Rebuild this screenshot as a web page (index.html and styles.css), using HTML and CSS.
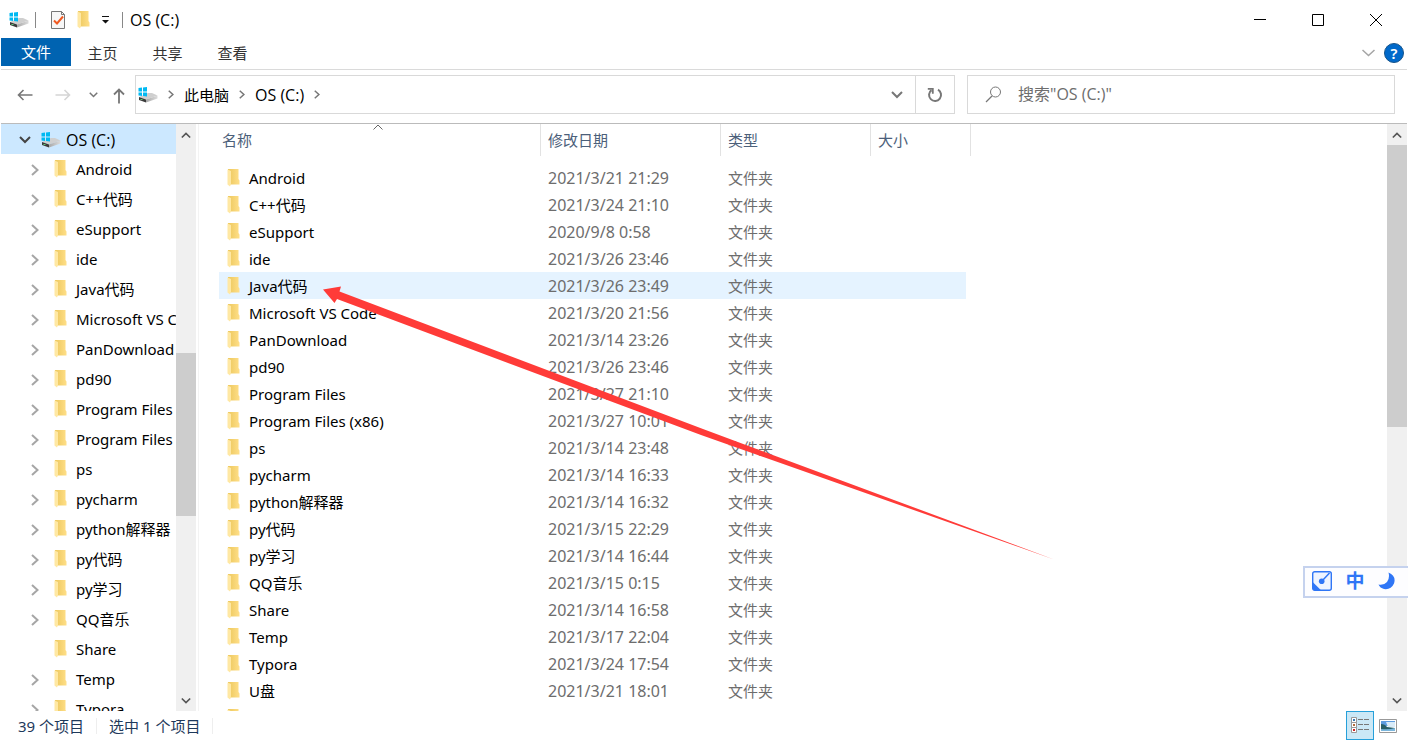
FILE: index.html
```html
<!DOCTYPE html>
<html lang="zh-CN">
<head>
<meta charset="utf-8">
<title>OS (C:)</title>
<link rel="stylesheet" href="styles.css">
</head>
<body>
<svg class="defs" aria-hidden="true">
  <defs>
    <linearGradient id="gold" x1="0" y1="0" x2="1" y2="0"><stop offset="0" stop-color="#ecc75c"/><stop offset="1" stop-color="#ffdf88"/></linearGradient>
    <linearGradient id="metal" x1="0" y1="0" x2="1" y2="0"><stop offset="0" stop-color="#a8a8a8"/><stop offset="1" stop-color="#dcdcdc"/></linearGradient>
  </defs>
  <symbol id="folder" viewBox="0 0 13 18"><path d="M1 0H11.500V10L12.500 11.500V15.500H2z" fill="url(#gold)"/><path d="M0.500 0.500L4 2V15L3 17.500L0.500 15.500z" fill="#ffe8a3"/></symbol>
  <symbol id="drive" viewBox="0 0 20 16"><path d="M1 10L10 6H14L19.500 8.500L8 12.500z" fill="#cfcfcf"/><path d="M1 10L8 12.500V15.500L1 13z" fill="#3b3b3b"/><path d="M8 12.500L19.500 8.500V11.500L8 15.500z" fill="url(#metal)"/><path d="M2.500 12h2v1h-2z" fill="#5fd07a"/><path d="M0.500 1L4 0.600V4.500H0.500zM5 0.500L9 0V4.500H5zM0.500 5.500H4V9L0.500 8.600zM5 5.500H9V9.500L5 9z" fill="#00b9f2"/></symbol>
  <symbol id="right" viewBox="0 0 8 12"><path d="M1 1l5.500 5L1 11" fill="none" stroke="currentColor" stroke-width="2"/></symbol>
  <symbol id="down" viewBox="0 0 12 8"><path d="M1 1l5 5 5-5" fill="none" stroke="currentColor" stroke-width="2"/></symbol>
  <symbol id="up" viewBox="0 0 12 8"><path d="M1 7l5-5 5 5" fill="none" stroke="currentColor" stroke-width="2"/></symbol>
</svg>
<div class="window">
  <header class="titlebar">
    <svg class="drive"><use href="#drive"/></svg>
    <span class="sep"></span>
    <button class="quick props" aria-label="属性"><svg width="14" height="18" viewBox="0 0 14 18"><path d="M0.500 0.500H10.500L13.500 3.500V17.500H0.500z" fill="#f7f7f7" stroke="#777"/><path d="M10.500 0.500V3.500H13.500" fill="none" stroke="#777"/><path d="M3 9.500L6 12.500L12 5.500" fill="none" stroke="#f05a22" stroke-width="2"/></svg></button>
    <button class="quick newdir" aria-label="新建文件夹"><svg class="folder"><use href="#folder"/></svg></button>
    <button class="quick more" aria-label="自定义快速访问工具栏"><svg width="7" height="8" viewBox="0 0 7 8"><path d="M0 0h7v1H0zM0 4h7L3.500 7.500z" fill="#111"/></svg></button>
    <span class="sep"></span>
    <h1 class="caption">OS (C:)</h1>
    <div class="winbtns">
      <button aria-label="最小化"><svg width="14" height="14"><path d="M1 6.500H13" stroke="#000"/></svg></button>
      <button aria-label="最大化"><svg width="14" height="14"><path d="M1.500 1.500H12.500V12.500H1.500z" fill="none" stroke="#000"/></svg></button>
      <button aria-label="关闭"><svg width="14" height="14"><path d="M1 1L13 13M13 1L1 13" stroke="#000"/></svg></button>
    </div>
  </header>
  <nav class="ribbon">
    <button class="tab file">文件</button>
    <button class="tab">主页</button>
    <button class="tab">共享</button>
    <button class="tab">查看</button>
    <button class="expand" aria-label="展开功能区"><svg width="13" height="8" viewBox="0 0 13 8"><path d="M0.500 1l6 5.500 6-5.500" fill="none" stroke="#a5a5a5" stroke-width="1.500"/></svg></button>
    <button class="help" aria-label="帮助">?</button>
  </nav>
  <div class="navbar">
    <button class="back" aria-label="返回"><svg width="16" height="12"><path d="M15.500 6H1.500M6.500 1L1.500 6L6.500 11" fill="none" stroke="#777" stroke-width="1.600"/></svg></button>
    <button class="forward" aria-label="前进"><svg width="16" height="12"><path d="M0.500 6H14.500M9.500 1L14.500 6L9.500 11" fill="none" stroke="#d5d5d5" stroke-width="1.600"/></svg></button>
    <button class="recent" aria-label="最近浏览的位置"><svg width="9" height="6" viewBox="0 0 12 8"><use href="#down"/></svg></button>
    <button class="parent" aria-label="上移"><svg width="12" height="16"><path d="M6 15.500V1.500M1 6.500L6 1.500L11 6.500" fill="none" stroke="#777" stroke-width="1.800"/></svg></button>
    <div class="address">
      <svg class="drive"><use href="#drive"/></svg>
      <svg class="crumb"><use href="#right"/></svg>
      <a href="#pc">此电脑</a>
      <svg class="crumb"><use href="#right"/></svg>
      <a href="#c" class="latin">OS (C:)</a>
      <svg class="crumb"><use href="#right"/></svg>
      <button class="history" aria-label="以前的位置"><svg width="12" height="8"><use href="#down"/></svg></button>
      <button class="refresh" aria-label="刷新"><svg width="16" height="16" viewBox="0 0 16 16"><path d="M4.500 3.100A6 6 0 1 0 11 2.700" fill="none" stroke="#777" stroke-width="2"/><path d="M0.800 1.800H5.800V6.800" fill="none" stroke="#777" stroke-width="1.800"/></svg></button>
    </div>
    <label class="search"><svg width="17" height="17" viewBox="0 0 17 17"><circle cx="10.500" cy="6" r="5" fill="none" stroke="#777"/><path d="M7 10L1 16" stroke="#777" stroke-width="1.300"/></svg><input type="text" aria-label="搜索" placeholder='搜索"OS (C:)"'></label>
  </div>
  <main class="body">
    <div class="treepane">
      <ul class="tree">
        <li class="root"><svg class="open"><use href="#down"/></svg><svg class="drive"><use href="#drive"/></svg>OS (C:)</li>
        <li><svg class="tw"><use href="#right"/></svg><svg class="folder"><use href="#folder"/></svg>Android</li>
        <li><svg class="tw"><use href="#right"/></svg><svg class="folder"><use href="#folder"/></svg>C++代码</li>
        <li><svg class="tw"><use href="#right"/></svg><svg class="folder"><use href="#folder"/></svg>eSupport</li>
        <li><svg class="tw"><use href="#right"/></svg><svg class="folder"><use href="#folder"/></svg>ide</li>
        <li><svg class="tw"><use href="#right"/></svg><svg class="folder"><use href="#folder"/></svg>Java代码</li>
        <li><svg class="tw"><use href="#right"/></svg><svg class="folder"><use href="#folder"/></svg>Microsoft VS Code</li>
        <li><svg class="tw"><use href="#right"/></svg><svg class="folder"><use href="#folder"/></svg>PanDownload</li>
        <li><svg class="tw"><use href="#right"/></svg><svg class="folder"><use href="#folder"/></svg>pd90</li>
        <li><svg class="tw"><use href="#right"/></svg><svg class="folder"><use href="#folder"/></svg>Program Files</li>
        <li><svg class="tw"><use href="#right"/></svg><svg class="folder"><use href="#folder"/></svg>Program Files (x86)</li>
        <li><svg class="tw"><use href="#right"/></svg><svg class="folder"><use href="#folder"/></svg>ps</li>
        <li><svg class="tw"><use href="#right"/></svg><svg class="folder"><use href="#folder"/></svg>pycharm</li>
        <li><svg class="tw"><use href="#right"/></svg><svg class="folder"><use href="#folder"/></svg>python解释器</li>
        <li><svg class="tw"><use href="#right"/></svg><svg class="folder"><use href="#folder"/></svg>py代码</li>
        <li><svg class="tw"><use href="#right"/></svg><svg class="folder"><use href="#folder"/></svg>py学习</li>
        <li><svg class="tw"><use href="#right"/></svg><svg class="folder"><use href="#folder"/></svg>QQ音乐</li>
        <li><svg class="tw"></svg><svg class="folder"><use href="#folder"/></svg>Share</li>
        <li><svg class="tw"><use href="#right"/></svg><svg class="folder"><use href="#folder"/></svg>Temp</li>
        <li><svg class="tw"><use href="#right"/></svg><svg class="folder"><use href="#folder"/></svg>Typora</li>
      </ul>
      <div class="scroll treescroll"><svg><use href="#up"/></svg><div class="track"><div class="thumb"></div></div><svg><use href="#down"/></svg></div>
    </div>
    <div class="listpane">
      <div class="files">
      <table>
        <thead><tr><th class="name">名称<svg class="sort" width="10" height="6"><path d="M0.500 5.500l4.500-4.500 4.500 4.500" fill="none" stroke="#666"/></svg></th><th class="date">修改日期</th><th class="type">类型</th><th class="size">大小</th></tr></thead>
        <tbody>
          <tr><td><svg class="folder"><use href="#folder"/></svg>Android</td><td>2021/3/21 21:29</td><td>文件夹</td><td></td></tr>
          <tr><td><svg class="folder"><use href="#folder"/></svg>C++代码</td><td>2021/3/24 21:10</td><td>文件夹</td><td></td></tr>
          <tr><td><svg class="folder"><use href="#folder"/></svg>eSupport</td><td>2020/9/8 0:58</td><td>文件夹</td><td></td></tr>
          <tr><td><svg class="folder"><use href="#folder"/></svg>ide</td><td>2021/3/26 23:46</td><td>文件夹</td><td></td></tr>
          <tr class="hover"><td><svg class="folder"><use href="#folder"/></svg>Java代码</td><td>2021/3/26 23:49</td><td>文件夹</td><td></td></tr>
          <tr><td><svg class="folder"><use href="#folder"/></svg>Microsoft VS Code</td><td>2021/3/20 21:56</td><td>文件夹</td><td></td></tr>
          <tr><td><svg class="folder"><use href="#folder"/></svg>PanDownload</td><td>2021/3/14 23:26</td><td>文件夹</td><td></td></tr>
          <tr><td><svg class="folder"><use href="#folder"/></svg>pd90</td><td>2021/3/26 23:46</td><td>文件夹</td><td></td></tr>
          <tr><td><svg class="folder"><use href="#folder"/></svg>Program Files</td><td>2021/3/27 21:10</td><td>文件夹</td><td></td></tr>
          <tr><td><svg class="folder"><use href="#folder"/></svg>Program Files (x86)</td><td>2021/3/27 10:01</td><td>文件夹</td><td></td></tr>
          <tr><td><svg class="folder"><use href="#folder"/></svg>ps</td><td>2021/3/14 23:48</td><td>文件夹</td><td></td></tr>
          <tr><td><svg class="folder"><use href="#folder"/></svg>pycharm</td><td>2021/3/14 16:33</td><td>文件夹</td><td></td></tr>
          <tr><td><svg class="folder"><use href="#folder"/></svg>python解释器</td><td>2021/3/14 16:32</td><td>文件夹</td><td></td></tr>
          <tr><td><svg class="folder"><use href="#folder"/></svg>py代码</td><td>2021/3/15 22:29</td><td>文件夹</td><td></td></tr>
          <tr><td><svg class="folder"><use href="#folder"/></svg>py学习</td><td>2021/3/14 16:44</td><td>文件夹</td><td></td></tr>
          <tr><td><svg class="folder"><use href="#folder"/></svg>QQ音乐</td><td>2021/3/15 0:15</td><td>文件夹</td><td></td></tr>
          <tr><td><svg class="folder"><use href="#folder"/></svg>Share</td><td>2021/3/14 16:58</td><td>文件夹</td><td></td></tr>
          <tr><td><svg class="folder"><use href="#folder"/></svg>Temp</td><td>2021/3/17 22:04</td><td>文件夹</td><td></td></tr>
          <tr><td><svg class="folder"><use href="#folder"/></svg>Typora</td><td>2021/3/24 17:54</td><td>文件夹</td><td></td></tr>
          <tr><td><svg class="folder"><use href="#folder"/></svg>U盘</td><td>2021/3/21 18:01</td><td>文件夹</td><td></td></tr>
          <tr><td><svg class="folder"><use href="#folder"/></svg></td><td></td><td></td><td></td></tr>
        </tbody>
      </table>
      <svg class="arrow" width="732" height="273" viewBox="0 0 732 273"><path d="M0 1.500L18 -1.500L16.500 3.500L380 141L731 271.500L378 147L14 11L11.500 15z" fill="#ff3b38"/></svg>
      </div>
      <div class="scroll listscroll"><svg><use href="#up"/></svg><div class="track"><div class="thumb"></div></div><svg><use href="#down"/></svg></div>
    </div>
  </main>
  <footer class="status">
    <span>39 个项目</span><span>选中 1 个项目</span>
    <button class="view on" aria-label="详细信息"><svg width="20" height="17" viewBox="0 0 20 17"><path d="M1.500 0.500h5v5h-5zM1.500 5.500h5v5h-5zM1.500 10.500h5v5h-5z" fill="#fff" stroke="#999"/><path d="M3 2h2v2H3z" fill="#357ab5"/><path d="M3 7h2v2H3z" fill="#b06b3a"/><path d="M3 12h2v2H3z" fill="#c22"/><path d="M8 2.500h5M14 2.500h5M8 7.500h5M14 7.500h5M8 12.500h5M14 12.500h5" stroke="#777"/></svg></button>
    <button class="view" aria-label="大缩略图"><svg width="18" height="14" viewBox="0 0 18 14"><path d="M0.500 0.500h17v13H0.500z" fill="#fff" stroke="#999"/><path d="M2 2h14v5H2z" fill="#5d9ce0"/><path d="M7 3h9v5H9z" fill="#d8ebf8"/><path d="M2 5q4 0 6 3l8 1v3H2z" fill="#285f67"/><path d="M2 10q8 1 14-1v3H2z" fill="#7bb6dc"/></svg></button>
  </footer>
  <div class="ime">
    <button aria-label="手写"><svg width="20" height="20" viewBox="0 0 20 20"><rect x="0.700" y="0.700" width="18.600" height="18.600" rx="2" fill="#eef4ff" stroke="#2f76f6" stroke-width="1.400"/><path d="M0.700 11L9 19.300H2.500Q0.700 19.300 0.700 17.500z" fill="#2f76f6"/><path d="M10 10L17.500 2" stroke="#2f76f6" stroke-width="1.500"/><circle cx="9.700" cy="10.200" r="2.800" fill="#2f76f6"/></svg></button>
    <button class="zh">中</button>
    <button aria-label="夜间模式"><svg width="17" height="18" viewBox="0 0 17 18"><path d="M10.500 0.500Q18.500 4 16 11.500Q13 18 6 17Q2 16 0.500 12.500Q6 13.500 9 10Q12 6 10.500 0.500z" fill="#2f76f6"/></svg></button>
  </div>
</div>
</body>
</html>
```
FILE: styles.css
```css
* { box-sizing: border-box; }
body {
  margin: 0;
  font: 15px/20px "Noto Sans", "Noto Sans CJK SC", sans-serif;
  color: #000;
  background: #fff;
}
button {
  display: flex;
  align-items: center;
  justify-content: center;
  flex: none;
  padding: 0;
  border: 0;
  background: none;
  font: inherit;
  color: inherit;
}
svg { flex: none; display: block; }
.defs { position: absolute; width: 0; height: 0; }
.window {
  position: relative;
  display: flex;
  flex-direction: column;
  height: 100vh;
  padding: 0 1px;
  overflow: hidden;
}
.drive { width: 20px; height: 16px; }
.folder { width: 13px; height: 18px; }

.titlebar { display: flex; align-items: center; height: 38px; padding: 2px 2px 0 8px; flex: none; }
.sep { width: 1px; height: 16px; background: #888; margin: 0 6px; }
.props { margin-left: 9px; }
.newdir { margin-left: 12px; }
.more { margin: 0 7px 0 12px; }
.caption { margin: 0 0 0 1px; font: 16px/20px "Open Sans", sans-serif; }
.winbtns { display: flex; margin-left: auto; }
.winbtns button { width: 58px; height: 36px; }

.ribbon { display: flex; height: 32px; flex: none; border-bottom: 1px solid #dadada; color: #333; }
.tab { width: 65px; height: 30px; padding-right: 2px; }
.file { width: 70px; height: 28px; padding: 0; background: #0063b1; color: #fff; }
.expand { margin-left: auto; width: 30px; height: 30px; }
.help {
  width: 20px; height: 20px; margin: 5px 3px 0 1px;
  border: 1px solid #17548a; border-radius: 50%;
  background: #0069ca; color: #fff; font-weight: 600;
}

.navbar { display: flex; align-items: center; height: 54px; flex: none; padding: 0 12px 4px 0; border-bottom: 1px solid #bbb; color: #777; }
.back { margin-left: 16px; }
.forward { margin-left: 22px; }
.recent { margin-left: 18px; }
.parent { margin: 2px 10px 0 15px; }
.address { display: flex; align-items: center; flex: 816; height: 39px; border: 1px solid #d9d9d9; padding-left: 2px; }
.address a { color: #000; text-decoration: none; }
.address .latin { font: 16px/20px "Open Sans", sans-serif; }
.crumb { width: 6px; height: 9px; margin: 0 10px; }
.history { margin-left: auto; width: 37px; height: 37px; }
.refresh { width: 39px; height: 37px; border-left: 1px solid #d9d9d9; }
.search { display: flex; align-items: center; flex: 409; height: 39px; margin-left: 12px; border: 1px solid #d9d9d9; padding-left: 17px; gap: 16px; }
.search input { flex: 1; min-width: 0; border: 0; padding: 0 0 2px; outline: 0; font: 16px/20px "Open Sans", "Noto Sans CJK SC", sans-serif; }
.search input::placeholder { color: #6d6d6d; opacity: 1; }

.body { display: flex; flex: 1; min-height: 0; }
.treepane { display: flex; width: 198px; flex: none; border-right: 1px solid #f3f3f3; }
.tree { flex: 1; min-width: 0; margin: 0; padding: 0; list-style: none; overflow: hidden; }
.tree li { display: flex; align-items: center; height: 30px; padding-left: 30px; white-space: nowrap; }
.tree .root { padding: 2px 0 0 18px; background: #cce8ff; font: 16px/20px "Open Sans", sans-serif; }
.open { width: 12px; height: 8px; margin-right: 10px; color: #444; }
.root .drive { margin-right: 5px; }
.tw { width: 8px; height: 12px; margin: 2px 15px 0 0; color: #a6a6a6; }
.tree .folder { margin-right: 9px; }

.scroll { display: flex; flex-direction: column; align-items: center; width: 20px; flex: none; background: #f0f0f0; color: #555; padding: 7px 0 6px; }
.scroll svg { width: 10px; height: 8px; }
.treescroll { margin-right: 2px; }
.track { flex: 1; align-self: stretch; margin: 6px 0; }
.thumb { background: #cdcdcd; height: 282px; }
.treescroll .thumb { height: 163px; margin-top: 208px; }

.listpane { display: flex; flex: 1; min-width: 0; }
.files { position: relative; flex: 1; min-width: 0; overflow: hidden; padding-left: 20px; }
table { width: 752px; table-layout: fixed; border-collapse: separate; border-spacing: 0; }
th { position: relative; height: 32px; padding: 0 0 0 7px; border-right: 1px solid #e2e2e2; text-align: left; font-weight: 400; color: #4c607a; }
.name { width: 322px; padding-left: 3px; }
.date { width: 180px; }
.type { width: 150px; }
.sort { position: absolute; left: 50%; top: 0; margin-left: -7px; }
tbody::before { content: ""; display: block; height: 8px; }
td { height: 27px; padding: 0 0 0 7px; color: #6d6d6d; white-space: nowrap; }
td:first-child { display: flex; align-items: center; padding-left: 8px; color: #000; }
td:nth-child(2) { font-size: 16px; }
td .folder { margin-right: 9px; }
.hover { background: linear-gradient(#e5f3ff, #e5f3ff) no-repeat 0 0 / calc(100% - 5px) 100%; }
.arrow { position: absolute; left: 124px; top: 164px; overflow: visible; }

.status { display: flex; align-items: center; height: 30px; flex: none; padding: 0 5px 1px; color: #1e395b; }
.status span { padding: 0 12px; border-right: 1px solid #eee; line-height: 16px; }
.view { width: 28px; height: 29px; }
.view.on { margin-left: auto; border: 1px solid #26a0da; background: #cbe8f6; }

.ime { position: absolute; right: 0; bottom: 143px; display: flex; align-items: center; justify-content: space-between; width: 105px; height: 32px; padding: 0 13px 2px 7px; border: 2px solid #c5d2ee; border-right: 0; background: #fdfdff; }
.zh { color: #2f76f6; font-size: 19px; font-weight: 700; }
```
